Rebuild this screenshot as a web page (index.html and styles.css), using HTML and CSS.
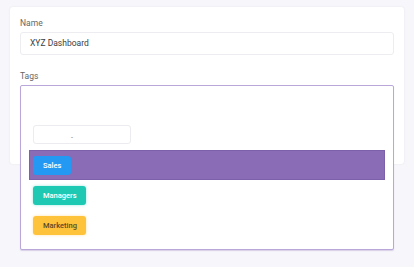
FILE: index.html
```html
<!DOCTYPE html>
<html>
<head>
<meta charset="utf-8">
<link rel="stylesheet" href="styles.css">
</head>
<body>
<div class="card">
  <div class="label">Name</div>
  <div class="input">XYZ Dashboard</div>
  <div class="label label-tags">Tags</div>
  <div class="field">
    <div class="dropdown">
      <div class="search"><span class="caret">-</span></div>
      <ul class="options">
        <li class="option active"><span class="tag tag-sales">Sales</span></li>
        <li class="option"><span class="tag tag-managers">Managers</span></li>
        <li class="option"><span class="tag tag-marketing">Marketing</span></li>
      </ul>
    </div>
  </div>
</div>
</body>
</html>
```

FILE: styles.css
```css
html, body {
  margin: 0;
  padding: 0;
}
body {
  background: #f7f6fa;
  font-family: Roboto, "Liberation Sans", Arial, sans-serif;
  padding: 7px 10px;
  width: 414px;
  height: 267px;
  box-sizing: border-box;
  overflow: hidden;
}
.card {
  width: 394px;
  height: 157px;
  box-sizing: border-box;
  background: #ffffff;
  border-radius: 3px;
  box-shadow: 0 0 2px rgba(60, 50, 90, 0.10);
  padding: 10px 10px 0 10px;
}
.label {
  font-size: 8.5px;
  line-height: 12px;
  color: #666;
  margin-bottom: 3px;
}
.label-tags {
  margin-top: 15px;
}
.input {
  height: 23px;
  box-sizing: border-box;
  border: 1px solid #ededf1;
  border-radius: 3px;
  padding: 0 9px;
  font-size: 8.5px;
  line-height: 21px;
  color: #3d3d3d;
}
.field {
  position: relative;
  height: 23px;
}
.dropdown {
  position: absolute;
  top: 0;
  left: 0;
  width: 374px;
  height: 165px;
  box-sizing: border-box;
  background: #fff;
  border: 1px solid #b9a7da;
  border-radius: 2px;
  box-shadow: 0 1px 1px rgba(120, 90, 170, 0.25);
  padding: 39px 8px 0 12px;
}
.search {
  width: 98px;
  height: 19px;
  box-sizing: border-box;
  border: 1px solid #ececf0;
  border-radius: 3px;
  padding-left: 37px;
  font-size: 7px;
  line-height: 24px;
  color: #777;
}
.options {
  list-style: none;
  margin: 6px 0 0 -4px;
  padding: 0;
}
.option {
  height: 30px;
  box-sizing: border-box;
  padding: 5px 3px;
  border: 1px solid transparent;
  display: flex;
  align-items: center;
}
.option.active {
  background: #8a6bb5;
  border-color: #7d60aa;
}
.tag {
  display: inline-block;
  height: 19px;
  box-sizing: border-box;
  padding: 0 10px;
  border-radius: 3px;
  font-size: 7.5px;
  font-weight: 500;
  line-height: 19px;
  color: #fff;
}
.tag-sales {
  background: #2399f3;
}
.tag-managers {
  background: #1ec9b3;
  box-shadow: 0 0 3px rgba(30, 201, 179, 0.45);
  width: 53px;
}
.tag-marketing {
  background: #ffc23b;
  color: #5b4a25;
  box-shadow: 0 0 3px rgba(255, 194, 59, 0.45);
  width: 53px;
}
```
